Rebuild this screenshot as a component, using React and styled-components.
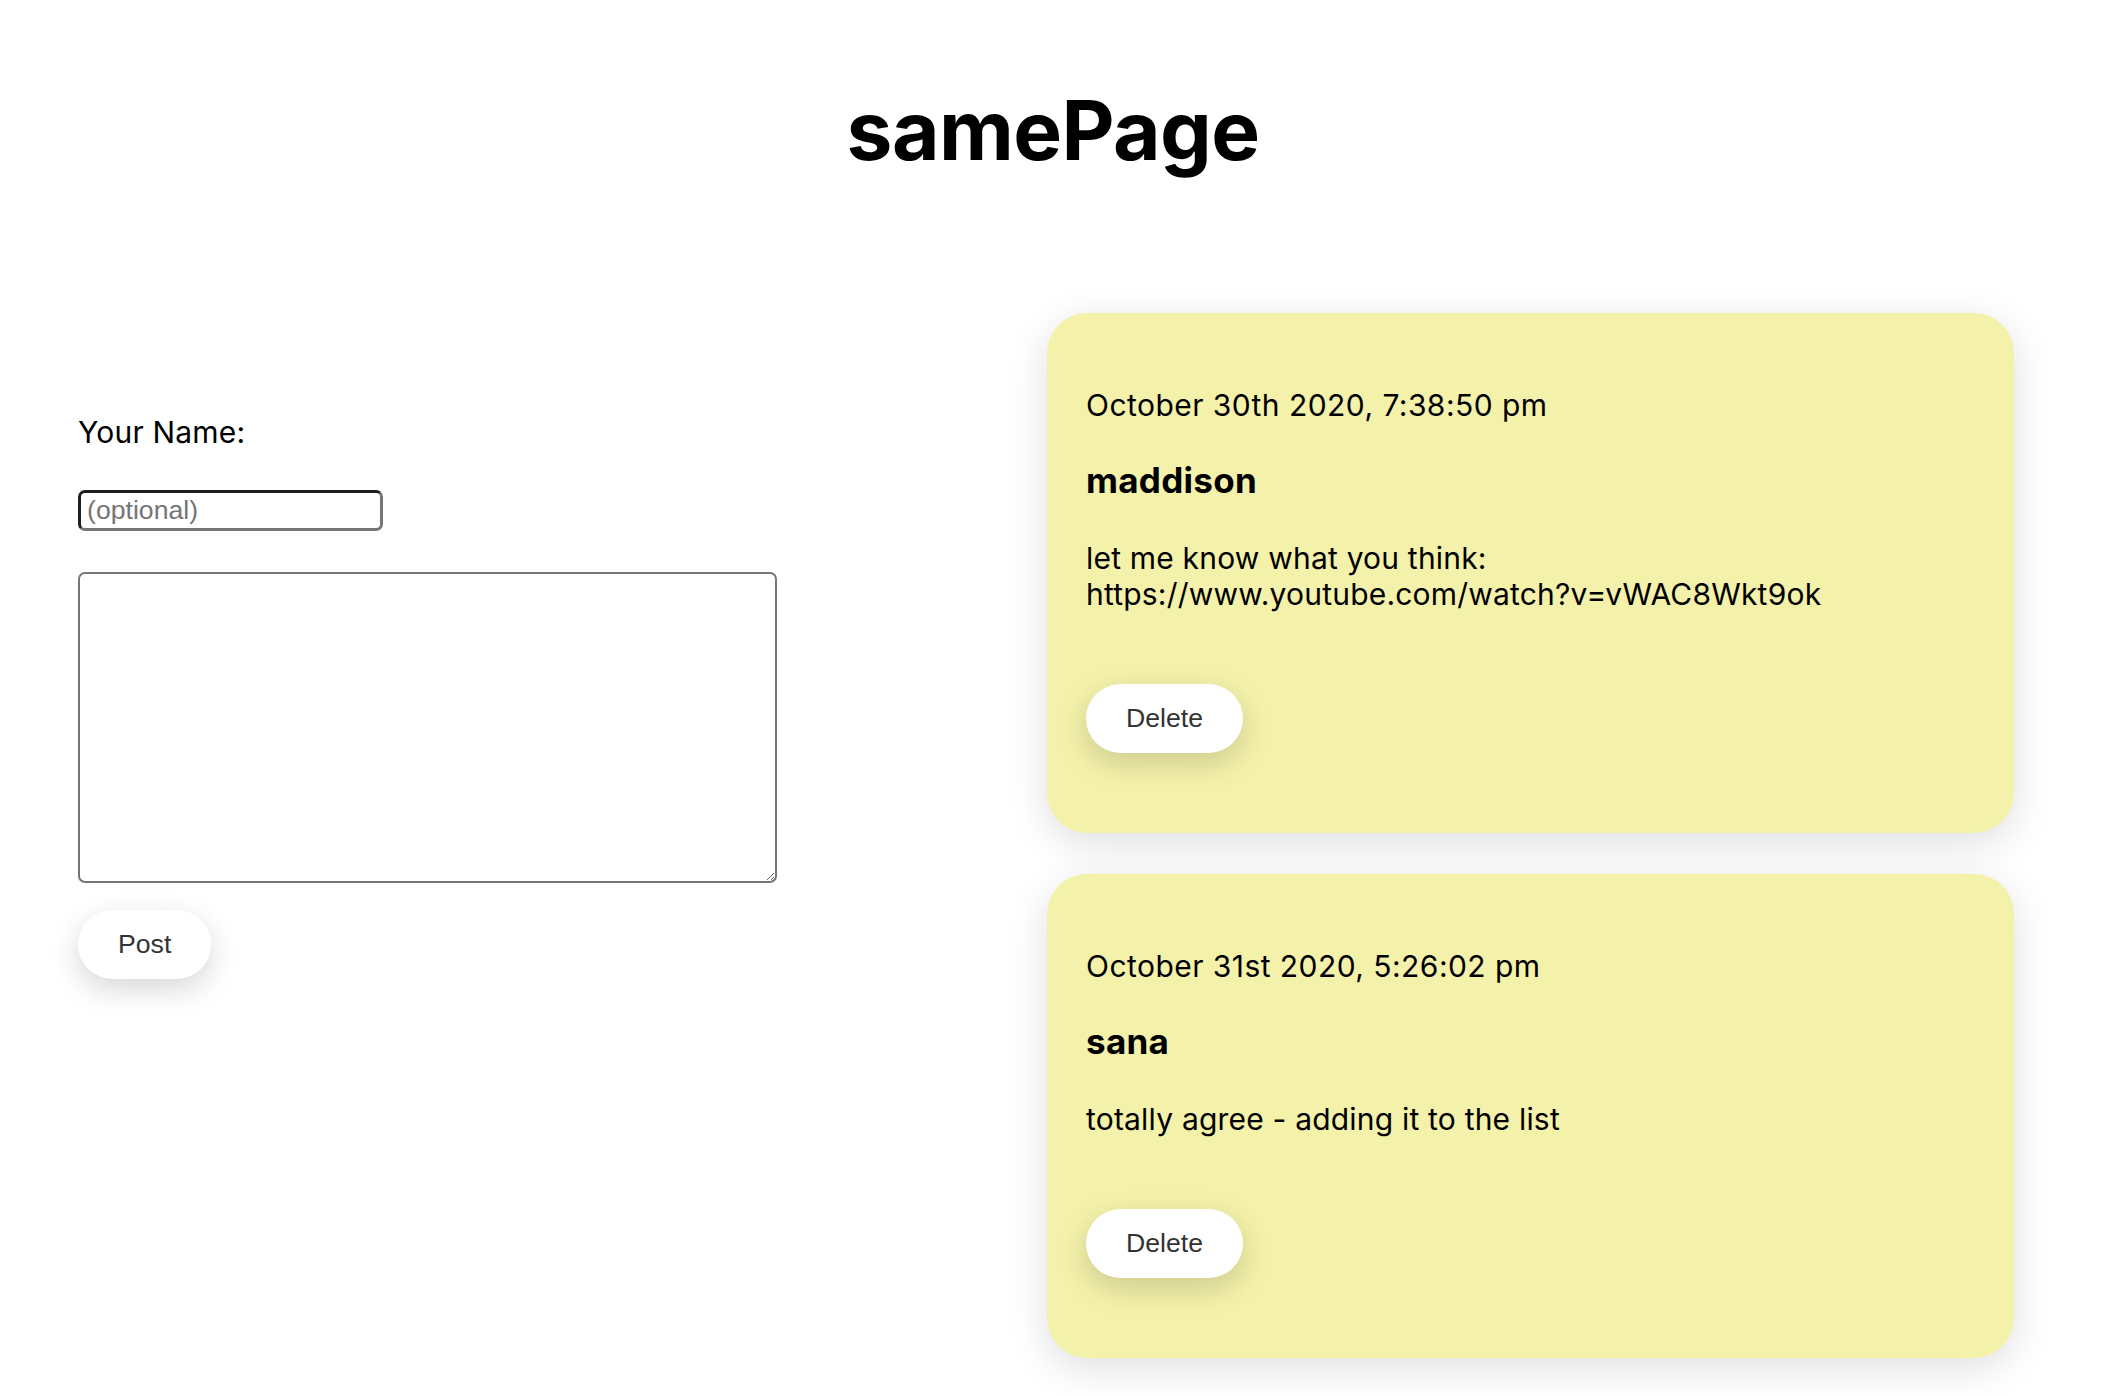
import React from "react";
import styled, { createGlobalStyle } from "styled-components";

const Global = createGlobalStyle`
  html, body { margin: 0; padding: 0; background: #ffffff; }
  body { font-family: Inter, "Noto Sans", sans-serif; color: #000; }
  * { box-sizing: border-box; }
`;

const Page = styled.div`
  width: 2106px;
  min-height: 1396px;
  overflow: hidden;
`;

const Title = styled.h1`
  margin: 0;
  padding-top: 81px;
  text-align: center;
  font-family: Inter, sans-serif;
  font-weight: 700;
  font-size: 82px;
  line-height: normal;
  letter-spacing: -0.6px;
`;

const Main = styled.main`
  display: grid;
  grid-template-columns: 1fr 967px;
  padding: 0 92px 0 78px;
  margin-top: 133px;
`;

const FormColumn = styled.section`
  display: flex;
  flex-direction: column;
  align-items: flex-start;
  padding-top: 101px;
`;

const Label = styled.label`
  font-size: 30px;
  line-height: normal;
  letter-spacing: 0.2px;
`;

const NameInput = styled.input`
  margin-top: 40px;
  width: 305px;
  height: 41px;
  padding: 0 6px;
  border: 3px solid;
  border-color: #1e1e1e #767676 #767676 #1e1e1e;
  border-radius: 7px;
  font-family: "Liberation Sans", Arial, sans-serif;
  font-size: 26.67px;
  outline: none;
  &::placeholder { color: #757575; }
`;

const Message = styled.textarea`
  margin-top: 41px;
  width: 699px;
  height: 311px;
  border: 2px solid #767676;
  border-radius: 7px;
  font-family: "Liberation Sans", Arial, sans-serif;
  font-size: 26.67px;
  padding: 4px;
  outline: none;
`;

const PillButton = styled.button`
  margin-top: ${(p) => p.$top}px;
  height: 69px;
  padding: 0 40px;
  border: none;
  border-radius: 35px;
  background: #ffffff;
  color: #333333;
  font-family: "Liberation Sans", Arial, sans-serif;
  font-size: 26.67px;
  box-shadow: 0 10px 30px rgba(0, 0, 0, 0.16);
  cursor: pointer;
`;

const Feed = styled.section`
  display: flex;
  flex-direction: column;
  gap: 41px;
`;

const Card = styled.article`
  background: #f4f1aa;
  border-radius: 40px;
  padding: 74px 40px 80px 39px;
  box-shadow: 0 10px 40px rgba(0, 0, 0, 0.13);
  display: flex;
  flex-direction: column;
  align-items: flex-start;
`;

const Stamp = styled.p`
  margin: 0;
  font-size: 30px;
  line-height: 36px;
  letter-spacing: 0.45px;
`;

const Author = styled.h3`
  margin: 36px 0 0;
  font-size: 35px;
  font-weight: 700;
  line-height: 42px;
  letter-spacing: 0.3px;
`;

const Body = styled.p`
  margin: 39px 0 0;
  font-size: 30px;
  line-height: 36px;
  letter-spacing: 0.2px;
  max-width: 860px;
  overflow-wrap: break-word;
`;

const posts = [
  {
    date: "October 30th 2020, 7:38:50 pm",
    name: "maddison",
    lines: ["let me know what you think:", "https://www.youtube.com/watch?v=vWAC8Wkt9ok"],
  },
  {
    date: "October 31st 2020, 5:26:02 pm",
    name: "sana",
    lines: ["totally agree - adding it to the list"],
  },
];

export default function App() {
  return (
    <Page>
      <Global />
      <Title>samePage</Title>
      <Main>
        <FormColumn>
          <Label>Your Name:</Label>
          <NameInput placeholder="(optional)" />
          <Message />
          <PillButton $top={27}>Post</PillButton>
        </FormColumn>
        <Feed>
          {posts.map((p) => (
            <Card key={p.date}>
              <Stamp>{p.date}</Stamp>
              <Author>{p.name}</Author>
              <Body>
                {p.lines.map((l, i) => (
                  <React.Fragment key={i}>
                    {i > 0 && <br />}
                    {l}
                  </React.Fragment>
                ))}
              </Body>
              <PillButton $top={72}>Delete</PillButton>
            </Card>
          ))}
        </Feed>
      </Main>
    </Page>
  );
}
